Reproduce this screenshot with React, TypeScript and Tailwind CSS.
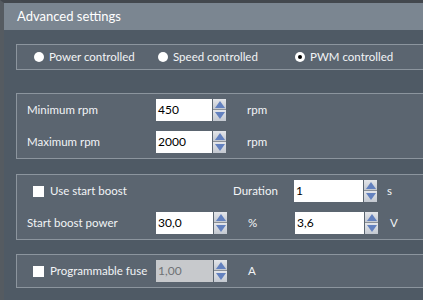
import type { ReactNode } from 'react';

const font = { fontFamily: 'Lato, "Open Sans", "Liberation Sans", sans-serif' };

function Spinner(): JSX.Element {
  return (
    <div className="flex h-[22px] w-[13px] flex-col">
      <div className="flex h-[11px] items-center justify-center border-b border-[#8a8f96] bg-[linear-gradient(#e4e6ea,#c3c8d0)]">
        <svg width="10" height="7" viewBox="0 0 10 7">
          <path d="M5 0 L10 7 L0 7 Z" fill="#6381bf" />
        </svg>
      </div>
      <div className="flex h-[11px] items-center justify-center bg-[linear-gradient(#e4e6ea,#c3c8d0)]">
        <svg width="10" height="7" viewBox="0 0 10 7">
          <path d="M0 0 L10 0 L5 7 Z" fill="#6381bf" />
        </svg>
      </div>
    </div>
  );
}

function NumberBox({ value, width, disabled }: { value: string; width: string; disabled?: boolean }): JSX.Element {
  return (
    <div className="flex items-center">
      <div
        className={`${width} flex h-[22px] items-center px-[2px] text-[12px] ${
          disabled ? 'bg-[#c7c9cc] text-[#6f7276]' : 'bg-white text-black'
        }`}
      >
        {value}
      </div>
      <div className="ml-px">
        <Spinner />
      </div>
    </div>
  );
}

function Panel({ className, children }: { className: string; children: ReactNode }): JSX.Element {
  return (
    <div className={`ml-[12px] w-[440px] border border-[#8c959e] bg-[#5b6570] ${className}`}>{children}</div>
  );
}

function Radio({ checked, label }: { checked?: boolean; label: string }): JSX.Element {
  return (
    <div className="flex items-center gap-[5px]">
      <span className="flex h-[10px] w-[10px] items-center justify-center rounded-full bg-white">
        {checked ? <span className="h-[4px] w-[4px] rounded-full bg-black" /> : null}
      </span>
      <span>{label}</span>
    </div>
  );
}

function Check({ label }: { label: string }): JSX.Element {
  return (
    <div className="ml-[6px] flex items-center gap-[6px]">
      <span className="h-[11px] w-[11px] bg-white" />
      <span>{label}</span>
    </div>
  );
}

export default function App(): JSX.Element {
  return (
    <div
      style={font}
      className="h-[300px] w-[423px] overflow-hidden border-l-[4px] border-t-[3px] border-l-[#555b61] border-t-[#43484e] bg-[#4f5a65] text-[11.5px] text-[#f2f4f6]"
    >
      <div className="flex h-[27px] items-center bg-[#7b8691] pl-[13px] text-[13px] text-white">Advanced settings</div>

      <Panel className="mt-[14px] flex h-[26px] items-center">
        <div className="ml-[17px] w-[124px]">
          <Radio label="Power controlled" />
        </div>
        <div className="w-[137px]">
          <Radio label="Speed controlled" />
        </div>
        <Radio checked label="PWM controlled" />
      </Panel>

      <Panel className="mt-[23px] flex flex-col gap-[10px] py-[5px] pl-[10px]">
        <div className="flex items-center">
          <span className="w-[129px]">Minimum rpm</span>
          <NumberBox value="450" width="w-[56px]" />
          <span className="ml-[21px]">rpm</span>
        </div>
        <div className="flex items-center">
          <span className="w-[129px]">Maximum rpm</span>
          <NumberBox value="2000" width="w-[56px]" />
          <span className="ml-[21px]">rpm</span>
        </div>
      </Panel>

      <Panel className="mt-[15px] flex flex-col gap-[10px] py-[5px] pl-[10px]">
        <div className="flex items-center">
          <div className="w-[206px]">
            <Check label="Use start boost" />
          </div>
          <span className="w-[61px]">Duration</span>
          <NumberBox value="1" width="w-[69px]" />
          <span className="ml-[10px]">s</span>
        </div>
        <div className="flex items-center">
          <span className="w-[129px]">Start boost power</span>
          <NumberBox value="30,0" width="w-[57px]" />
          <span className="ml-[21px] w-[47px]">%</span>
          <NumberBox value="3,6" width="w-[69px]" />
          <span className="ml-[12px]">V</span>
        </div>
      </Panel>

      <Panel className="mt-[14px] flex items-center py-[5px] pl-[10px]">
        <div className="w-[129px]">
          <Check label="Programmable fuse" />
        </div>
        <NumberBox value="1,00" width="w-[57px]" disabled />
        <span className="ml-[21px]">A</span>
      </Panel>
    </div>
  );
}
